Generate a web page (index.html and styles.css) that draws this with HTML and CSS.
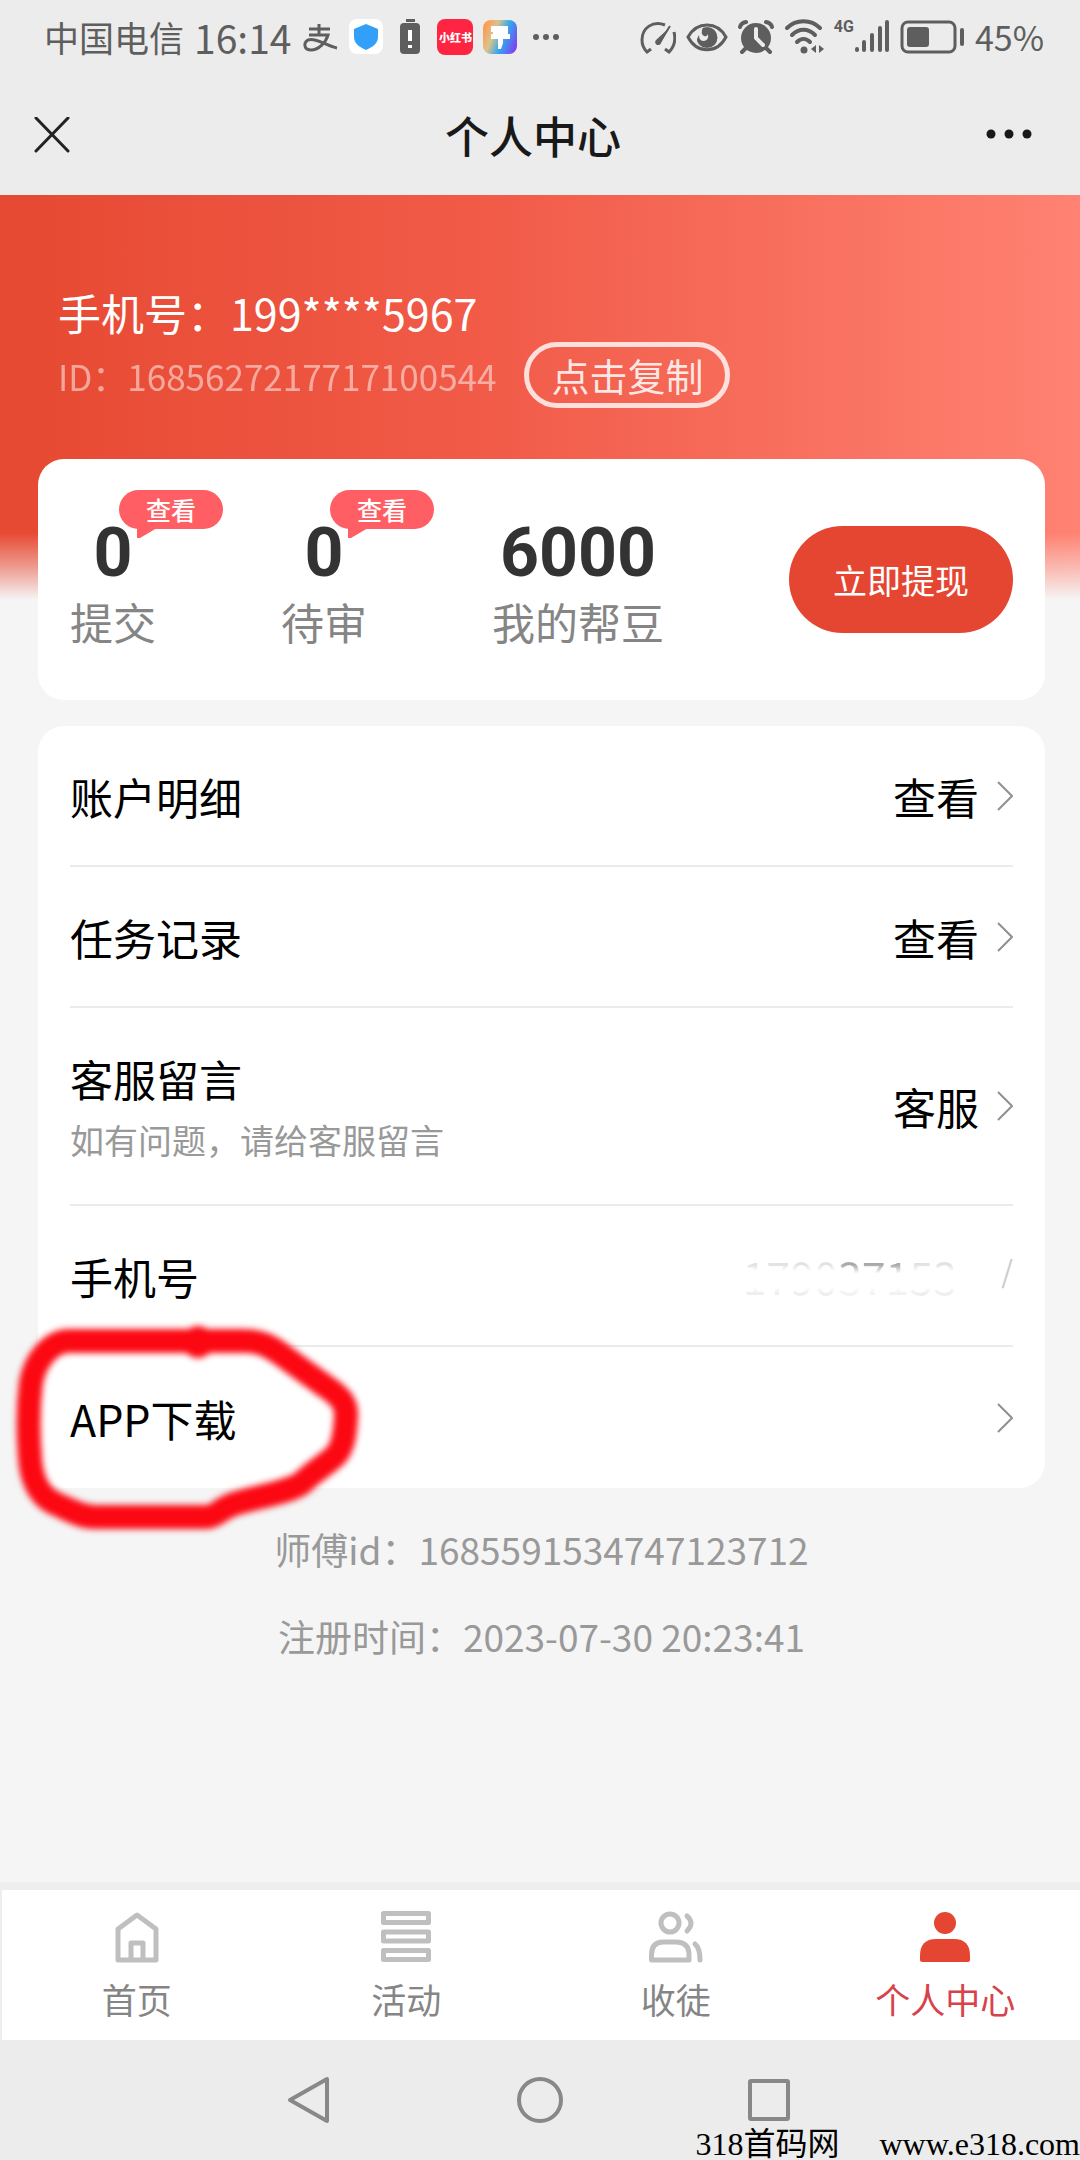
FILE: index.html
```html
<!DOCTYPE html>
<html lang="zh-CN">
<head>
<meta charset="utf-8">
<meta name="viewport" content="width=device-width, initial-scale=1">
<title>个人中心</title>
<link rel="stylesheet" href="styles.css">
</head>
<body>
<div class="status">
  <div class="status-group">
    <span class="carrier">中国电信</span>
    <span class="clock">16:14</span>
    <svg width="38" height="40" viewBox="2 0 38 40" fill="none" stroke="#5e5e5e" stroke-width="3"><path d="M10 12H31M20 7V18M10 18H29C27 25 20 33 12 33C5 33 4 26 9 23C16 20 28 29 38 31" /></svg>
    <svg width="34" height="40" viewBox="0 0 34 40"><rect y="2" width="34" height="35" rx="8" fill="#fff"/><path d="M17 7L29 12V20C29 26 24 30 17 33C10 30 5 26 5 20V12Z" fill="#32a0f8"/></svg>
    <svg width="34" height="40" viewBox="0 0 34 40"><rect x="7" y="6" width="20" height="31" rx="4" fill="#5e5e5e"/><path d="M13 3.500H22" stroke="#5e5e5e" stroke-width="3"/><path d="M17 13V24M17 28V31" stroke="#fff" stroke-width="4"/></svg>
    <span class="app-red">小红书</span>
    <svg width="34" height="40" viewBox="0 0 34 40"><defs><linearGradient id="rb" x1="0" y1="0.300" x2="1" y2="0.700"><stop offset="0" stop-color="#ff9a52"/><stop offset=".3" stop-color="#d9c48c"/><stop offset=".6" stop-color="#35a8ef"/><stop offset="1" stop-color="#7a45f0"/></linearGradient></defs><rect y="3" width="34" height="34" rx="8" fill="url(#rb)"/><path d="M8 9H25V17H27V22H20V26L18 32H15V22H8V17H10V15H8Z" fill="#fff"/></svg>
    <svg width="38" height="40" viewBox="0 0 38 40" fill="#5e5e5e"><circle cx="9" cy="20" r="3"/><circle cx="19" cy="20" r="3"/><circle cx="29" cy="20" r="3"/></svg>
  </div>
  <div class="status-group">
    <svg width="36" height="40" viewBox="0 0 36 40" fill="none" stroke="#5e5e5e" stroke-width="3"><path d="M25 8C13 3 2 11 2 23C2 28 4 32 7 35L11 32M34 15C36 23 34 30 29 35L25 32"/><path d="M30 9L20 25" stroke-width="2"/><path d="M29 11L21 26A3 3 0 1 1 16 23Z" fill="#5e5e5e" stroke="none"/></svg>
    <svg width="42" height="40" viewBox="0 0 42 40"><path d="M2 20C11 4 31 4 40 20C31 37 11 37 2 20Z" fill="none" stroke="#5e5e5e" stroke-width="3"/><circle cx="21" cy="20.500" r="10.500" fill="#5e5e5e"/><path d="M10 16L17 10Q14 17 18 19Q21 20 22 17Q23 23 18 24Q13 24 13 18L10 24Z" fill="#ececec"/></svg>
    <svg width="36" height="40" viewBox="0 0 36 40"><circle cx="18" cy="21" r="15" fill="#5e5e5e"/><path d="M2 10Q3 6 8 5M34 10Q33 6 28 5M8 31L4 35M28 31L32 35" stroke="#5e5e5e" stroke-width="4" stroke-linecap="round" fill="none"/><path d="M18 12V21L25 28" stroke="#ececec" stroke-width="4" stroke-linecap="round" fill="none"/></svg>
    <svg width="40" height="40" viewBox="0 0 40 40" fill="none" stroke="#5e5e5e" stroke-width="4" stroke-linecap="round"><path d="M3 11C12 2 27 2 36 11M8 18C15 11 24 11 31 18M13 25C17 21 22 21 26 25"/><circle cx="20" cy="33" r="3.500" fill="#5e5e5e" stroke="none"/><path d="M32 28V36L27 32ZM35 28L40 32L35 36Z" fill="#5e5e5e" stroke="none"/></svg>
    <span class="signal"><span class="net">4G</span>
    <svg width="36" height="40" viewBox="0 0 36 40" stroke="#5e5e5e" stroke-width="4" stroke-linecap="round"><path d="M3 32V33M10 25V33M18 18V33M26 11V33M33 5V33"/></svg></span>
    <svg width="65" height="40" viewBox="0 0 65 40"><rect x="2" y="5" width="53" height="30" rx="6" fill="none" stroke="#5e5e5e" stroke-width="3"/><rect x="7" y="10" width="22" height="20" rx="3" fill="#5e5e5e"/><path d="M62 13V27" stroke="#5e5e5e" stroke-width="4" stroke-linecap="round"/></svg>
    <span class="percent">45%</span>
  </div>
</div>

<header class="header">
  <button class="icon-btn" type="button" aria-label="关闭"><svg width="36" height="36" viewBox="0 0 36 36" stroke="#222" stroke-width="3" stroke-linecap="round"><path d="M2 1L34 34M34 1L2 34"/></svg></button>
  <h1 class="title">个人中心</h1>
  <button class="icon-btn icon-btn-end" type="button" aria-label="更多"><svg width="46" height="36" viewBox="0 0 46 36" fill="#191919"><circle cx="5" cy="17" r="4.500"/><circle cx="23" cy="17" r="4.500"/><circle cx="41" cy="17" r="4.500"/></svg></button>
</header>

<main class="main">
  <section class="profile">
    <p class="phone">手机号：199****5967</p>
    <div class="id-row">
      <span class="uid">ID：1685627217717100544</span>
      <button class="copy" type="button">点击复制</button>
    </div>
  </section>

  <section class="card stats">
    <div class="stat"><b class="value">0</b><span class="label">提交</span><a class="badge" href="#submitted">查看</a></div>
    <div class="stat"><b class="value">0</b><span class="label">待审</span><a class="badge" href="#pending">查看</a></div>
    <div class="stat"><b class="value">6000</b><span class="label">我的帮豆</span></div>
    <button class="withdraw" type="button">立即提现</button>
  </section>

  <nav class="card menu">
    <a class="row" href="#account"><span>账户明细</span><span class="row-end">查看<svg class="chevron" viewBox="0 0 16 30"><path d="M1 1L15 15L1 29"/></svg></span></a>
    <a class="row" href="#tasks"><span>任务记录</span><span class="row-end">查看<svg class="chevron" viewBox="0 0 16 30"><path d="M1 1L15 15L1 29"/></svg></span></a>
    <a class="row row-tall" href="#service"><span class="stack"><span>客服留言</span><small class="hint">如有问题，请给客服留言</small></span><span class="row-end">客服<svg class="chevron" viewBox="0 0 16 30"><path d="M1 1L15 15L1 29"/></svg></span></a>
    <div class="row"><span>手机号</span><span class="erased"><span class="faint">1790</span><span class="partial">371</span><span class="faint">53</span><span class="slash">/</span></span></div>
    <a class="row" href="#app"><span>APP下载</span><span class="row-end"><svg class="chevron" viewBox="0 0 16 30"><path d="M1 1L15 15L1 29"/></svg></span>
      <svg class="scribble" width="370" height="220" viewBox="0 0 370 220"><g fill="none" stroke="#fb0812" stroke-width="24" stroke-linejoin="round"><path d="M69 24H245C268 24 280 37 293 46L325 69C342 80 347 88 346 100C345 118 343 130 336 138C326 148 315 153 303 165C292 175 255 180 234 187C220 192 215 200 207 200H95C80 200 66 191 54 186C38 178 31 160 30 140C28 115 28 90 31 66C35 42 52 24 69 24Z"/><circle cx="198" cy="25" r="4"/></g></svg>
    </a>
  </nav>

  <div class="info">
    <p>师傅id：1685591534747123712</p>
    <p>注册时间：2023-07-30 20:23:41</p>
  </div>
</main>

<nav class="tabs">
  <a class="tab" href="#home"><svg width="54" height="54" viewBox="0 0 54 54" fill="none" stroke="#bfbfbf" stroke-width="5" stroke-linejoin="round"><path d="M8 19L27 5L46 19V50H8ZM21 50V33H33V50"/></svg>首页</a>
  <a class="tab" href="#activity"><svg width="54" height="54" viewBox="0 0 54 54" fill="none" stroke="#bfbfbf" stroke-width="5" stroke-linejoin="round"><path d="M4.500 3.500H49.500V12.500H4.500ZM4.500 22H49.500V31H4.500ZM4.500 40.500H49.500V49.500H4.500Z"/></svg>活动</a>
  <a class="tab" href="#invite"><svg width="54" height="54" viewBox="0 0 54 54" fill="none" stroke="#bfbfbf" stroke-width="5" stroke-linejoin="round" stroke-linecap="round"><circle cx="21" cy="13" r="9"/><path d="M38 6Q46 13 38 21M2.500 50V45Q2.500 32 14 32H27Q40 32 40 45V50ZM46 34Q51 38 51 50"/></svg>收徒</a>
  <a class="tab tab-on" href="#me"><svg width="54" height="54" viewBox="0 0 54 54" fill="#e54631"><circle cx="27" cy="13" r="11"/><path d="M2 50V46Q2 29 18 29H36Q52 29 52 46V50Q52 52 50 52H4Q2 52 2 50Z"/></svg>个人中心</a>
</nav>

<footer class="sysnav">
  <div class="sysnav-keys">
    <button class="key" type="button" aria-label="返回"><svg width="50" height="50" viewBox="0 0 50 50"><path d="M41 4V46L4 25Z"/></svg></button>
    <button class="key" type="button" aria-label="主页"><svg width="50" height="50" viewBox="0 0 50 50"><circle cx="25" cy="25" r="21"/></svg></button>
    <button class="key" type="button" aria-label="最近"><svg width="50" height="50" viewBox="0 0 50 50"><rect x="6" y="6" width="38" height="38" rx="1"/></svg></button>
  </div>
  <p class="watermark"><span>318首码网</span><span>www.e318.com</span></p>
</footer>
</body>
</html>
```
FILE: styles.css
```css
* { box-sizing: border-box; }
body {
  margin: 0;
  min-height: 100vh;
  display: flex;
  flex-direction: column;
  background: #ececec;
  color: #000;
  font-family: "Noto Sans CJK SC", sans-serif;
  font-size: 43px;
}
p, h1 { margin: 0; font-weight: 400; }
svg { display: block; flex: none; }
a { color: inherit; text-decoration: none; }
button { font: inherit; color: inherit; background: none; border: 0; padding: 0; }

.status {
  height: 74px;
  padding: 0 36px 0 44px;
  display: flex;
  justify-content: space-between;
  align-items: center;
  color: #5e5e5e;
  white-space: nowrap;
}
.status-group { display: flex; align-items: center; gap: 10px; line-height: 40px; }
.carrier { font-size: 35px; }
.clock { font-size: 39px; }
.percent { font-size: 34px; }
.app-red {
  width: 36px;
  line-height: 36px;
  border-radius: 8px;
  background: #ff2442;
  color: #fff;
  font-size: 11px;
  font-weight: 900;
  text-align: center;
}
.signal { display: flex; }
.net { font-family: Roboto, sans-serif; font-size: 16px; font-weight: 700; line-height: 20px; }

.header {
  height: 121px;
  padding: 0 48px 0 34px;
  display: grid;
  grid-template-columns: 1fr auto 1fr;
  align-items: center;
}
.title { font-size: 44px; font-weight: 500; line-height: 60px; color: #191919; }
.icon-btn-end { justify-self: end; }

.main {
  flex: 1;
  padding: 87px 35px 0 38px;
  background:
    linear-gradient(to bottom, rgba(245, 245, 245, 0) 338px, rgba(245, 245, 245, .5) 374px, #f5f5f5 405px) no-repeat top / 100% 405px,
    linear-gradient(to right, #e74a33 3%, #f15b48 45%, #ff8272 100%) no-repeat top / 100% 405px,
    #f5f5f5;
}
.profile { padding: 0 20px; color: #fff; }
.phone { font-size: 43px; line-height: 60px; }
.id-row { display: flex; align-items: center; gap: 28px; }
.uid { font-size: 35px; opacity: .5; }
.copy {
  width: 206px;
  height: 66px;
  border: 5px solid rgba(255, 255, 255, .8);
  border-radius: 33px;
  color: rgba(255, 255, 255, .85);
  font-size: 38px;
  line-height: 54px;
}

.card { background: #fff; border-radius: 26px; padding: 0 32px; }
.stats { margin-top: 51px; display: flex; align-items: center; gap: 125px; }
.stat {
  position: relative;
  padding: 58px 0 47px;
  display: flex;
  flex-direction: column;
  align-items: center;
}
.value { font-family: Roboto, sans-serif; font-size: 68px; line-height: 72px; color: #333; }
.label { line-height: 64px; color: #858585; }
.badge {
  position: absolute;
  left: 49px;
  top: 31px;
  width: 104px;
  border-radius: 20px;
  background: #ff5f64;
  color: #fff;
  font-size: 25px;
  line-height: 39px;
  font-weight: 500;
  text-align: center;
}
.badge::after {
  content: "";
  position: absolute;
  left: 18px;
  top: 38px;
  width: 20px;
  height: 10px;
  background: #ff5f64;
  clip-path: polygon(0 0, 100% 0, 15% 100%, 0 100%);
}
.withdraw {
  margin-left: auto;
  width: 224px;
  height: 107px;
  border-radius: 54px;
  background: #e54631;
  color: #fff;
  font-size: 34px;
}

.menu { margin-top: 26px; }
.row {
  position: relative;
  height: 141px;
  display: flex;
  justify-content: space-between;
  align-items: center;
  border-bottom: 2px solid #ebebeb;
}
.row:last-child { border-bottom: 0; }
.row-tall { height: 198px; }
.stack { padding-top: 6px; display: flex; flex-direction: column; line-height: 62px; }
.hint { font-size: 34px; color: #999; }
.row-end { display: flex; align-items: center; gap: 18px; }
.chevron { width: 16px; height: 30px; fill: none; stroke: #909090; stroke-width: 2; }
.erased { display: flex; align-items: center; color: transparent; }
.partial {
  background: linear-gradient(to bottom, #aaa 32%, #fff 46%, #fff 68%, #f2f2f2 78%);
  background-clip: text;
  -webkit-background-clip: text;
}
.faint {
  background: linear-gradient(to bottom, #e2e2e2 32%, #fff 42%, #fff 68%, #eee 78%);
  background-clip: text;
  -webkit-background-clip: text;
}
.slash { margin-left: 44px; font-size: 30px; line-height: 48px; padding-bottom: 12px; color: #ccc; }
.scribble { position: absolute; left: -70px; top: -30px; filter: blur(3px); pointer-events: none; }

.info { padding-top: 18px; font-size: 37px; line-height: 87px; color: #999; text-align: center; }

.tabs {
  height: 158px;
  border-top: 8px solid #eeeeee;
  border-left: 2px solid #eeeeee;
  display: flex;
  background: #fff;
}
.tab {
  flex: 1;
  padding-top: 20px;
  display: flex;
  flex-direction: column;
  align-items: center;
  font-size: 35px;
  line-height: 70px;
  color: #858585;
}
.tab-on { color: #d8424b; }

.sysnav { height: 120px; padding-top: 35px; }
.sysnav-keys { display: flex; justify-content: center; gap: 179px; }
.key svg { fill: none; stroke: #888; stroke-width: 4; stroke-linejoin: round; }
.watermark {
  display: flex;
  justify-content: flex-end;
  gap: 40px;
  font-family: "Liberation Serif", "Noto Sans CJK SC", serif;
  font-size: 32px;
  line-height: 38px;
}
```
